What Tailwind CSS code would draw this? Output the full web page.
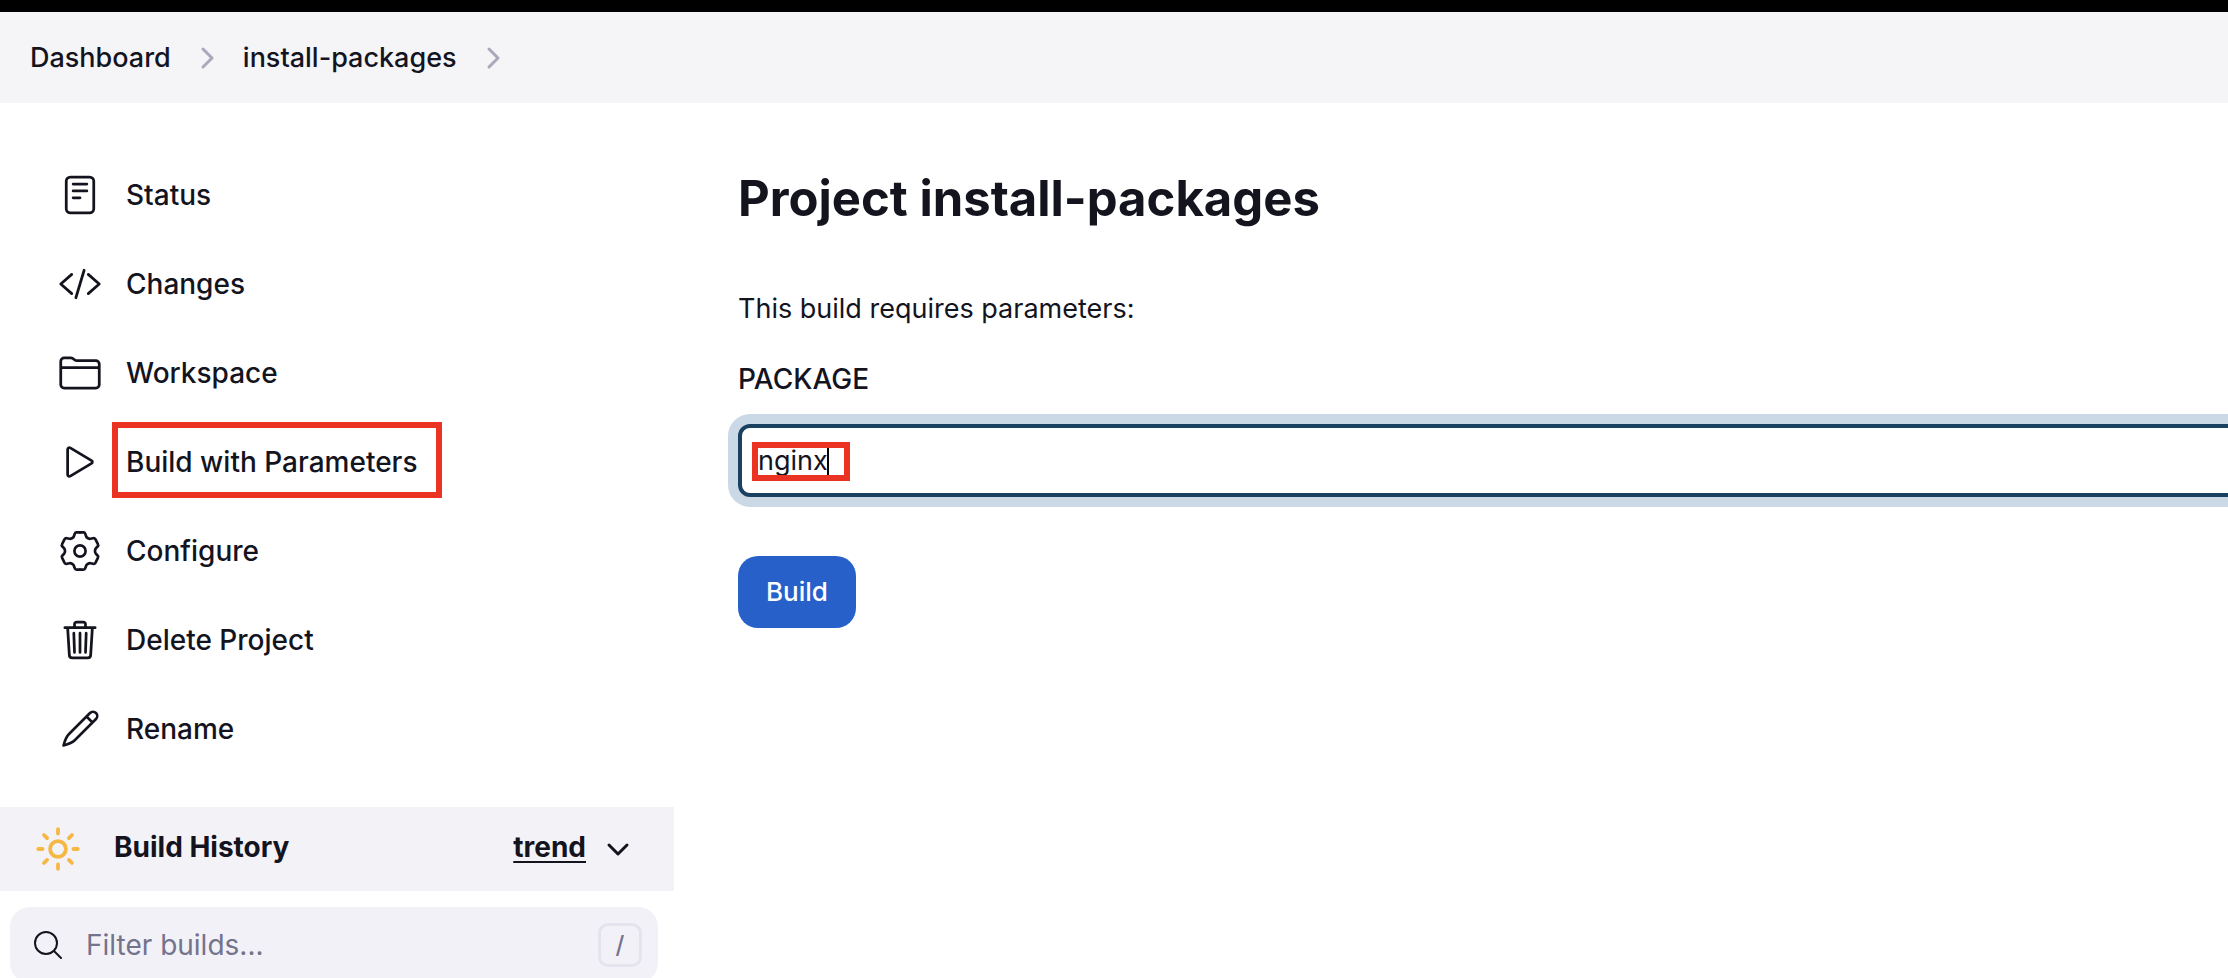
<!DOCTYPE html>
<html lang="en">
<head>
<meta charset="utf-8">
<title>install-packages</title>
<script src="https://cdn.jsdelivr.net/npm/@tailwindcss/browser@4"></script>
</head>
<body class="h-screen overflow-hidden bg-white font-['Inter',sans-serif] text-[28px] leading-9 text-[#14141f]">
<header class="border-t-12 border-black bg-[#f5f5f8]">
  <nav aria-label="Breadcrumb" class="flex h-[91px] items-center px-[30px] text-[27px] font-medium">
    <a href="#">Dashboard</a>
    <svg class="mx-7 h-6 w-4 text-[#a9a9bb]" viewBox="0 0 16 24" fill="none" stroke="currentColor" stroke-width="3" stroke-linecap="round" stroke-linejoin="round"><path d="M4 3l9 9-9 9"/></svg>
    <a href="#">install-packages</a>
    <svg class="mx-7 h-6 w-4 text-[#a9a9bb]" viewBox="0 0 16 24" fill="none" stroke="currentColor" stroke-width="3" stroke-linecap="round" stroke-linejoin="round"><path d="M4 3l9 9-9 9"/></svg>
  </nav>
</header>
<div class="flex">
  <aside class="w-[674px] shrink-0">
    <nav aria-label="Project" class="flex flex-col gap-[17px] pt-14 pb-[42px] pl-[58px] font-medium">
      <a href="#" class="flex h-18 items-center gap-6">
        <svg class="size-11" viewBox="0 0 512 512" fill="none" stroke="currentColor" stroke-width="32" stroke-linecap="round" stroke-linejoin="round"><rect x="96" y="48" width="320" height="416" rx="48"/><path d="M176 128h160M176 208h160M176 288h80"/></svg>
        Status</a>
      <a href="#" class="flex h-18 items-center gap-6">
        <svg class="size-11" viewBox="0 0 512 512" fill="none" stroke="currentColor" stroke-width="32" stroke-linecap="round" stroke-linejoin="round"><path d="M160 368L32 256l128-112M352 368l128-112-128-112M304 96l-96 320"/></svg>
        Changes</a>
      <a href="#" class="flex h-18 items-center gap-6">
        <svg class="size-11" viewBox="0 0 512 512" fill="none" stroke="currentColor" stroke-width="32" stroke-linecap="round" stroke-linejoin="round"><path d="M440 432H72a40 40 0 01-40-40V120a40 40 0 0140-40h75.89a40 40 0 0122.19 6.72l27.84 18.56a40 40 0 0022.19 6.72H440a40 40 0 0140 40v240a40 40 0 01-40 40zM32 192h448"/></svg>
        Workspace</a>
      <a href="#" class="flex h-18 items-center gap-6">
        <svg class="size-11" viewBox="0 0 512 512" fill="none" stroke="currentColor" stroke-width="32" stroke-miterlimit="10"><path d="M112 111v290c0 17.44 17 28.52 31 20.16l247.9-148.37c12.12-7.25 12.12-26.33 0-33.58L143 90.84c-14-8.36-31 2.72-31 20.16z"/></svg>
        <span class="relative">Build with Parameters<span class="absolute -top-[22px] -right-6 -bottom-[18px] -left-[14px] border-6 border-[#ea3323]"></span></span></a>
      <a href="#" class="flex h-18 items-center gap-6">
        <svg class="size-11" viewBox="2 2 44 44" fill="none" stroke="currentColor" stroke-width="2.7" stroke-linecap="round" stroke-linejoin="round"><circle cx="24" cy="24" r="5.6"/><path d="M24 5.4h3.5c1 0 1.5.6 1.8 1.5l.9 2.6c.3.9 1 1.4 1.8 1.8c.9.5 1.6.7 2.5.5l2.6-.6c1-.2 1.8.1 2.3 1l2.5 5c.5.9.4 1.6-.3 2.3l-1.7 1.8c-.6.7-.9 1.4-.9 2.7c0 1.3.3 2 .9 2.7l1.7 1.8c.7.7.8 1.4.3 2.3l-2.5 5c-.5.9-1.3 1.2-2.3 1l-2.6-.6c-.9-.2-1.6 0-2.5.5c-.8.4-1.5.9-1.8 1.8l-.9 2.6c-.3.9-.8 1.5-1.8 1.5H24"/><path transform="matrix(-1 0 0 1 48 0)" d="M24 5.4h3.5c1 0 1.5.6 1.8 1.5l.9 2.6c.3.9 1 1.4 1.8 1.8c.9.5 1.6.7 2.5.5l2.6-.6c1-.2 1.8.1 2.3 1l2.5 5c.5.9.4 1.6-.3 2.3l-1.7 1.8c-.6.7-.9 1.4-.9 2.7c0 1.3.3 2 .9 2.7l1.7 1.8c.7.7.8 1.4.3 2.3l-2.5 5c-.5.9-1.3 1.2-2.3 1l-2.6-.6c-.9-.2-1.6 0-2.5.5c-.8.4-1.5.9-1.8 1.8l-.9 2.6c-.3.9-.8 1.5-1.8 1.5H24"/></svg>
        Configure</a>
      <a href="#" class="flex h-18 items-center gap-6">
        <svg class="size-11" viewBox="0 0 512 512" fill="none" stroke="currentColor" stroke-width="32" stroke-linecap="round" stroke-linejoin="round"><path d="M112 112l20 320c.95 18.49 14.4 32 32 32h184c17.67 0 30.87-13.51 32-32l20-320M80 112h352M192 112V72a23.93 23.93 0 0124-24h80a23.93 23.93 0 0124 24v40M256 176v224M184 176l8 224M328 176l-8 224"/></svg>
        Delete Project</a>
      <a href="#" class="flex h-18 items-center gap-6">
        <svg class="size-11" viewBox="0 0 44 44" fill="none" stroke="currentColor" stroke-width="2.6" stroke-linecap="round" stroke-linejoin="round"><path d="M32 6L11 27c-3 3-4 6-5.500 11.500 5.500-1.500 8.500-2.500 11.500-5.500L38 12a4.200 4.200 0 0 0-6-6zM28.500 9.500l6 6"/></svg>
        Rename</a>
    </nav>
    <section aria-label="Build History">
      <div class="flex h-21 items-center bg-[#f3f2f7] pl-9 pr-11 font-bold">
        <svg class="size-11 text-[#f6b845]" viewBox="0 0 512 512" fill="none" stroke="currentColor" stroke-width="44" stroke-linecap="round"><path d="M256 26v50M256 436v50M26 256h50M436 256h50M93 93l36 36M383 383l36 36M419 93l-36 36M129 383l-36 36"/><circle cx="256" cy="256" r="92"/></svg>
        <h2 class="ml-[34px] grow pb-1">Build History</h2>
        <a href="#" class="pb-1 underline decoration-2 underline-offset-4">trend</a>
        <button type="button" aria-label="Collapse" class="ml-5"><svg class="h-6 w-6" viewBox="0 0 24 24" fill="none" stroke="currentColor" stroke-width="3" stroke-linecap="round" stroke-linejoin="round"><path d="M3 8l9 9 9-9"/></svg></button>
      </div>
      <label class="mt-4 ml-[10px] mr-4 flex h-19 items-center rounded-[20px] bg-[#f2f1f7] pl-6 pr-4">
        <svg class="size-7" viewBox="0 0 28 28" fill="none" stroke="currentColor" stroke-width="2" stroke-linecap="round"><circle cx="12" cy="12" r="11"/><path d="M20 20l7 7"/></svg>
        <input type="search" aria-label="Filter builds" placeholder="Filter builds..." class="ml-6 min-w-0 grow bg-transparent outline-none placeholder:text-[#73738c]">
        <kbd class="flex size-11 items-center justify-center rounded-[10px] border-3 border-[#e4e3ee] font-['Inter',sans-serif] text-2xl font-medium text-[#73738c]">/</kbd>
      </label>
    </section>
  </aside>
  <main class="min-w-0 grow pt-[68px] pl-16">
    <h1 class="text-[49px] leading-[56px] font-bold">Project install-packages</h1>
    <form>
      <p class="mt-16 text-[27px]">This build requires parameters:</p>
      <label for="package" class="mt-[34px] block w-fit font-medium">PACKAGE</label>
      <div class="relative mt-[27px] -mr-10">
        <input id="package" type="text" value="nginx" class="block h-[73px] w-full rounded-xl border-4 border-[#1a4160] bg-white px-4 text-[27px] ring-10 ring-[#cbd9e6] outline-none">
        <span class="absolute top-[18px] left-[14px] h-[39px] w-[98px] border-6 border-[#ea3323]"></span>
        <span class="absolute top-6 left-[89px] h-[27px] w-[2px] bg-black"></span>
      </div>
      <button type="button" class="mt-[59px] h-18 rounded-[20px] bg-[#2860ca] px-7 text-[26px] font-medium text-white">Build</button>
    </form>
  </main>
</div>
</body>
</html>
